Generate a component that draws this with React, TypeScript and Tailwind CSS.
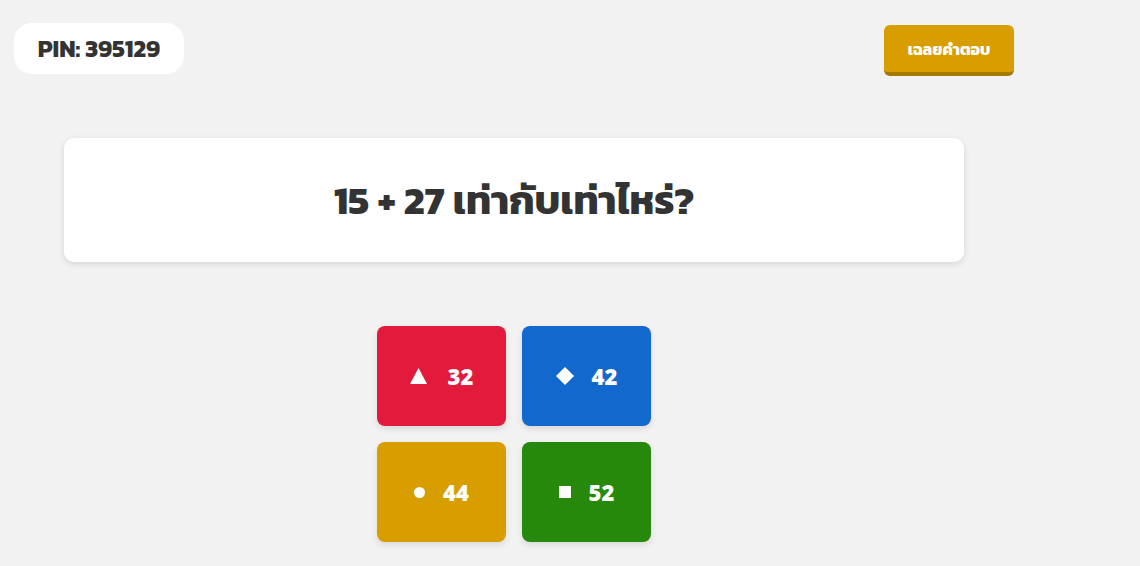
import { useState } from "react";

type Shape = "triangle" | "diamond" | "circle" | "square";

interface Choice {
  shape: Shape;
  label: string;
  color: string;
}

const choices: Choice[] = [
  { shape: "triangle", label: "32", color: "bg-[#e21b3c]" },
  { shape: "diamond", label: "42", color: "bg-[#1368ce]" },
  { shape: "circle", label: "44", color: "bg-[#d89e00]" },
  { shape: "square", label: "52", color: "bg-[#26890c]" },
];

function ShapeIcon({ shape }: { shape: Shape }) {
  if (shape === "triangle")
    return (
      <svg width="17" height="16" viewBox="0 0 17 16" className="mr-[3px]">
        <polygon points="8.5,0 17,16 0,16" fill="white" />
      </svg>
    );
  if (shape === "diamond")
    return (
      <svg width="18" height="18" viewBox="0 0 18 18">
        <polygon points="9,0 18,9 9,18 0,9" fill="white" />
      </svg>
    );
  if (shape === "circle")
    return (
      <svg width="11" height="11" viewBox="0 0 11 11">
        <circle cx="5.5" cy="5.5" r="5.5" fill="white" />
      </svg>
    );
  return (
    <svg width="12" height="12" viewBox="0 0 12 12">
      <rect width="12" height="12" fill="white" />
    </svg>
  );
}

export default function App() {
  const [revealed, setRevealed] = useState(false);

  return (
    <div
      className="min-h-screen bg-[#f2f2f2] text-[#333333]"
      style={{ fontFamily: '"Kanit", "Noto Sans", "DejaVu Sans", sans-serif' }}
    >
      <div className="w-[1000px] ml-[14px] pt-[23px]">
        {/* Top bar */}
        <div className="flex items-start justify-between">
          <div className="bg-white rounded-[18px] h-[51px] w-[170px] flex items-center justify-center text-[24px] font-bold">
            PIN: 395129
          </div>
          <button
            onClick={() => setRevealed(!revealed)}
            className="mt-[2px] h-[51px] w-[130px] rounded-[6px] bg-[#d89e00] border-b-4 border-[#a57800] text-white text-[16px] font-bold"
          >
            เฉลยคำตอบ
          </button>
        </div>

        {/* Question */}
        <div className="mx-[50px] mt-[62px] h-[124px] bg-white rounded-[10px] shadow-[0_2px_6px_rgba(0,0,0,0.12)] flex items-center justify-center">
          <h1 className="text-[40px] font-bold">15 + 27 เท่ากับเท่าไหร่?</h1>
        </div>

        {/* Answers */}
        <div className="mt-[64px] grid grid-cols-[129px_129px] gap-4 justify-center">
          {choices.map((c) => (
            <div
              key={c.label}
              className={`${c.color} h-[100px] rounded-[8px] shadow-[0_3px_6px_rgba(0,0,0,0.1)] flex items-center justify-center gap-[18px] text-white ${
                revealed && c.label !== "42" ? "opacity-40" : ""
              }`}
            >
              <ShapeIcon shape={c.shape} />
              <span
                className="text-[22px] font-extrabold leading-none"
                style={{ fontFamily: '"Open Sans", "Noto Sans", sans-serif' }}
              >
                {c.label}
              </span>
            </div>
          ))}
        </div>
      </div>
    </div>
  );
}
